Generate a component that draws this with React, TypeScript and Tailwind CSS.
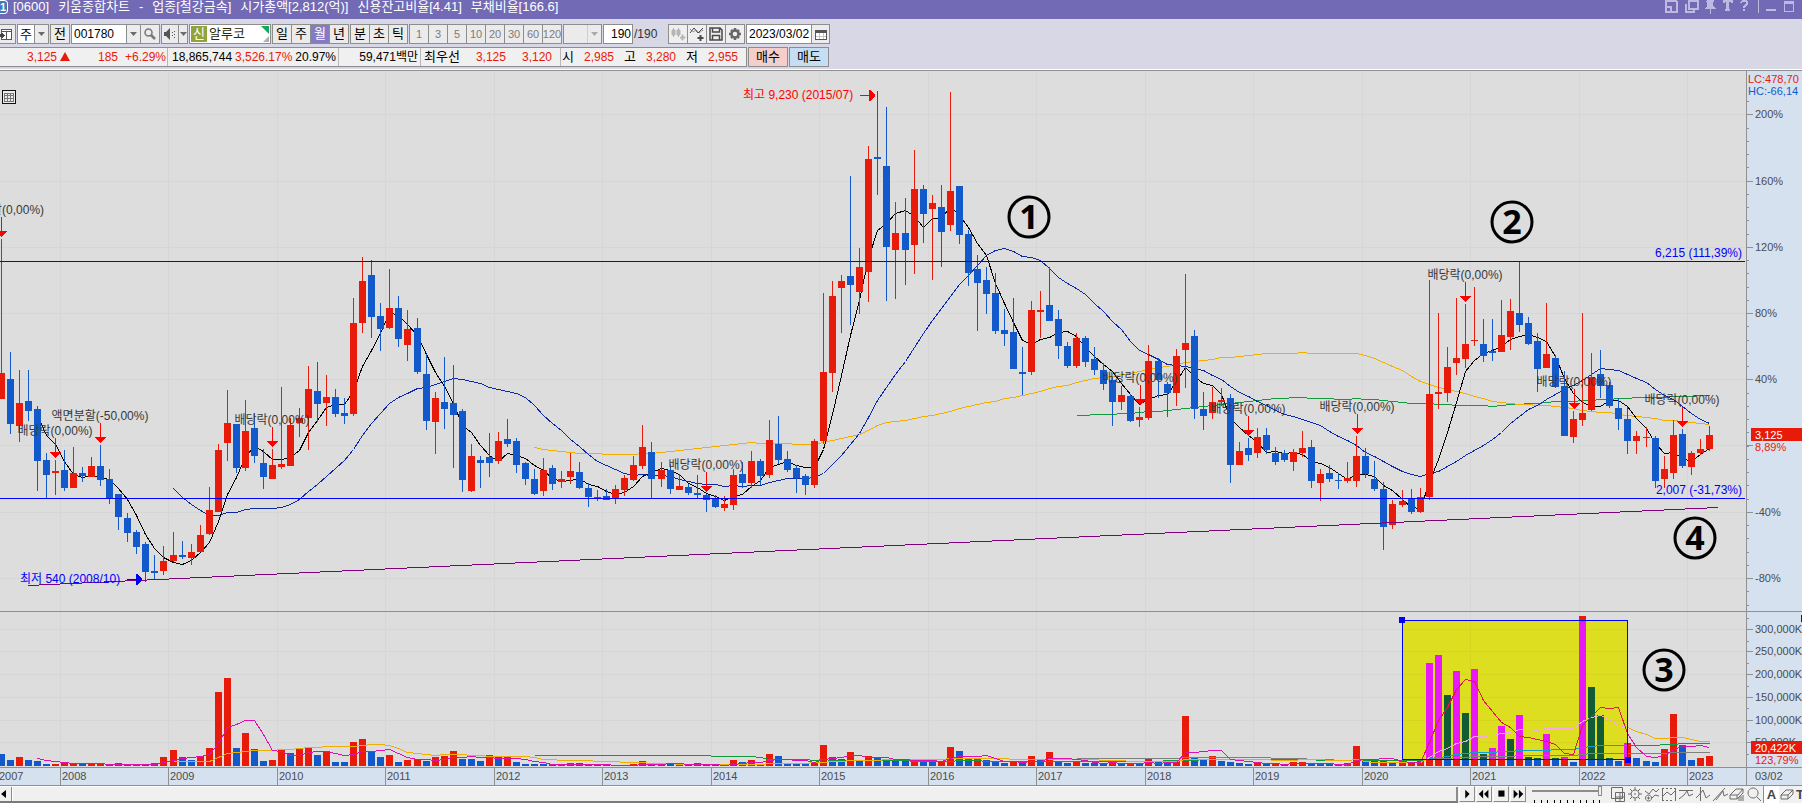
import React from 'react'

// up, high, body top, body bottom, low, volume up, volume height
type Candle = [number, number, number, number, number, number, number]

const CANDLES: Candle[] = [
  [1, 239, 373, 399, 399, 0, 12], [0, 352, 379, 424, 434, 0, 6], [1, 370, 403, 426, 442, 1, 9], [0, 370, 401, 411, 421, 0, 6],
  [0, 406, 409, 461, 491, 0, 5], [0, 453, 460, 475, 498, 0, 2], [1, 460, 471, 473, 495, 1, 2], [0, 450, 470, 488, 491, 1, 4],
  [1, 447, 473, 488, 488, 1, 3], [0, 467, 473, 476, 482, 0, 2], [1, 457, 466, 477, 477, 1, 2], [0, 445, 466, 480, 486, 1, 2],
  [0, 469, 479, 499, 504, 1, 2], [0, 494, 494, 517, 530, 1, 3], [0, 513, 518, 533, 542, 0, 2], [0, 530, 532, 547, 554, 1, 2],
  [0, 542, 544, 572, 582, 0, 2], [0, 555, 571, 573, 579, 1, 3], [1, 546, 561, 571, 575, 1, 9], [1, 532, 555, 561, 562, 1, 16],
  [0, 541, 555, 557, 559, 0, 9], [1, 544, 552, 558, 565, 0, 6], [1, 525, 535, 552, 552, 1, 10], [1, 487, 510, 534, 535, 1, 18],
  [1, 444, 450, 512, 512, 1, 74], [1, 390, 423, 443, 461, 1, 88], [0, 424, 424, 468, 473, 0, 18], [1, 400, 431, 468, 471, 1, 33],
  [0, 413, 428, 456, 463, 0, 17], [0, 449, 463, 477, 489, 0, 5], [1, 449, 465, 479, 479, 1, 6], [1, 387, 464, 467, 469, 1, 16],
  [1, 418, 425, 466, 466, 0, 13], [1, 408, 418, 423, 437, 1, 17], [1, 366, 389, 418, 450, 1, 19], [0, 362, 391, 404, 422, 0, 11],
  [1, 375, 397, 403, 426, 1, 15], [0, 389, 397, 414, 417, 0, 4], [0, 398, 413, 416, 424, 0, 4], [1, 298, 323, 414, 416, 1, 24],
  [1, 257, 281, 323, 333, 1, 27], [0, 260, 275, 317, 338, 0, 15], [0, 303, 316, 329, 351, 0, 9], [1, 269, 308, 328, 329, 1, 11],
  [0, 296, 308, 339, 347, 0, 4], [1, 310, 329, 345, 361, 1, 6], [0, 318, 328, 372, 374, 1, 7], [0, 354, 374, 421, 430, 0, 5],
  [1, 392, 398, 422, 454, 1, 9], [0, 357, 402, 409, 429, 1, 10], [0, 365, 403, 415, 468, 1, 15], [0, 409, 411, 480, 492, 0, 7],
  [1, 444, 456, 491, 492, 0, 7], [0, 456, 460, 463, 488, 0, 5], [0, 433, 457, 463, 477, 1, 11], [1, 432, 441, 461, 464, 0, 9],
  [0, 419, 439, 444, 447, 1, 10], [0, 438, 441, 465, 473, 0, 4], [0, 462, 463, 479, 485, 0, 2], [0, 469, 479, 494, 495, 0, 2],
  [1, 458, 470, 491, 496, 0, 2], [0, 465, 468, 484, 490, 0, 2], [1, 471, 479, 482, 488, 1, 2], [1, 453, 471, 477, 484, 1, 3],
  [0, 462, 472, 488, 489, 0, 3], [0, 483, 488, 497, 507, 0, 1], [1, 490, 497, 498, 501, 0, 1], [0, 489, 496, 500, 500, 1, 1],
  [1, 485, 489, 499, 504, 1, 1], [1, 475, 478, 490, 496, 1, 1], [1, 456, 465, 480, 481, 1, 2], [1, 425, 447, 466, 469, 1, 5],
  [0, 442, 452, 479, 498, 0, 2], [1, 462, 470, 479, 487, 0, 2], [0, 464, 470, 489, 494, 0, 2], [1, 474, 486, 490, 490, 0, 2],
  [0, 484, 487, 493, 495, 0, 1], [0, 475, 493, 495, 498, 1, 3], [0, 494, 495, 500, 512, 0, 1], [0, 495, 498, 507, 508, 0, 1],
  [1, 496, 504, 508, 511, 1, 1], [1, 469, 475, 505, 510, 1, 6], [0, 462, 474, 483, 488, 0, 4], [1, 451, 461, 483, 488, 1, 6],
  [0, 459, 461, 476, 485, 0, 2], [1, 420, 440, 475, 478, 1, 12], [0, 416, 444, 460, 464, 0, 10], [0, 451, 459, 470, 472, 0, 3],
  [0, 465, 468, 478, 493, 0, 3], [0, 474, 476, 485, 495, 0, 2], [1, 439, 441, 485, 488, 1, 4], [1, 293, 372, 441, 444, 1, 21],
  [1, 281, 296, 373, 392, 0, 9], [1, 275, 281, 288, 333, 0, 7], [0, 176, 276, 285, 325, 1, 14], [1, 248, 267, 292, 314, 0, 5],
  [1, 146, 159, 272, 302, 1, 10], [0, 91, 157, 159, 195, 0, 8], [0, 107, 166, 247, 301, 0, 6], [1, 202, 233, 250, 299, 0, 6],
  [0, 198, 233, 250, 285, 0, 6], [1, 150, 189, 245, 274, 1, 6], [0, 185, 189, 214, 243, 0, 5], [1, 195, 203, 209, 280, 0, 5],
  [0, 185, 207, 232, 267, 1, 4], [1, 92, 191, 225, 231, 1, 19], [0, 186, 186, 235, 244, 0, 15], [0, 230, 234, 273, 286, 0, 7],
  [0, 255, 269, 283, 331, 1, 7], [0, 267, 280, 294, 314, 0, 6], [0, 273, 293, 331, 334, 0, 4], [0, 309, 330, 334, 346, 0, 3],
  [0, 298, 332, 369, 369, 1, 5], [0, 347, 372, 374, 395, 0, 3], [1, 301, 310, 372, 375, 1, 10], [1, 291, 310, 312, 338, 0, 6],
  [0, 267, 305, 321, 321, 1, 14], [0, 310, 319, 346, 359, 0, 5], [0, 342, 346, 366, 368, 0, 3], [1, 333, 338, 366, 368, 1, 5],
  [0, 336, 338, 362, 367, 0, 3], [0, 347, 359, 370, 375, 0, 3], [0, 363, 370, 384, 390, 0, 2], [0, 377, 380, 402, 426, 1, 5],
  [1, 386, 395, 402, 410, 0, 2], [0, 394, 396, 421, 422, 1, 2], [1, 407, 417, 420, 427, 0, 2], [1, 345, 361, 418, 420, 1, 7],
  [0, 358, 361, 380, 398, 0, 4], [0, 382, 384, 393, 417, 0, 4], [1, 349, 356, 393, 406, 1, 5], [1, 274, 343, 350, 388, 1, 50],
  [0, 330, 336, 409, 419, 0, 9], [0, 392, 409, 416, 430, 0, 6], [1, 387, 402, 413, 419, 1, 10], [1, 388, 400, 402, 406, 0, 5],
  [0, 394, 398, 465, 483, 0, 4], [1, 442, 451, 465, 465, 0, 3], [0, 438, 448, 455, 461, 0, 2], [1, 428, 437, 453, 458, 1, 4],
  [0, 428, 435, 450, 454, 0, 2], [0, 447, 453, 462, 465, 1, 2], [0, 450, 453, 460, 462, 0, 2], [1, 449, 452, 462, 471, 1, 4],
  [1, 431, 448, 453, 457, 1, 4], [0, 440, 447, 481, 488, 0, 2], [1, 469, 474, 483, 501, 0, 2], [0, 465, 473, 479, 482, 0, 2],
  [0, 473, 480, 481, 489, 1, 2], [1, 462, 478, 481, 483, 1, 3], [1, 436, 456, 481, 487, 1, 20], [0, 448, 456, 474, 478, 0, 6],
  [0, 461, 479, 489, 491, 0, 5], [0, 482, 489, 527, 550, 1, 5], [1, 500, 504, 525, 529, 0, 3], [1, 490, 501, 505, 507, 1, 5],
  [0, 489, 499, 512, 514, 1, 4], [1, 488, 497, 512, 513, 1, 5], [1, 280, 394, 497, 500, 1, 103], [1, 313, 392, 394, 409, 1, 111],
  [1, 347, 367, 393, 402, 0, 71], [1, 298, 358, 363, 375, 1, 95], [1, 304, 344, 359, 368, 0, 53], [1, 287, 340, 341, 346, 1, 97],
  [0, 319, 344, 356, 362, 0, 12], [0, 319, 351, 353, 361, 1, 18], [1, 300, 335, 352, 352, 1, 40], [1, 299, 311, 337, 350, 0, 27],
  [0, 261, 313, 325, 332, 1, 51], [0, 317, 323, 344, 345, 0, 9], [0, 333, 341, 369, 392, 0, 8], [1, 303, 354, 368, 368, 1, 32],
  [0, 355, 358, 387, 388, 0, 8], [0, 371, 386, 436, 436, 1, 9], [1, 411, 419, 437, 443, 0, 4], [1, 313, 413, 420, 426, 1, 150],
  [1, 353, 377, 410, 411, 0, 79], [0, 350, 374, 386, 398, 0, 51], [0, 382, 385, 406, 408, 0, 8], [0, 398, 408, 419, 430, 0, 5],
  [0, 407, 419, 441, 454, 1, 23], [1, 431, 436, 441, 454, 0, 8], [1, 427, 437, 438, 447, 0, 5], [0, 436, 438, 481, 488, 0, 4],
  [1, 456, 469, 479, 488, 1, 17], [1, 420, 435, 473, 479, 1, 52], [0, 429, 434, 466, 468, 0, 21], [1, 451, 453, 467, 475, 0, 6],
  [1, 439, 449, 453, 455, 1, 8], [1, 426, 435, 449, 451, 1, 10],
]

const YEARS = [
  { x: -3, label: '2007' }, { x: 60, label: '2008' }, { x: 168, label: '2009' }, { x: 277, label: '2010' },
  { x: 385, label: '2011' }, { x: 494, label: '2012' }, { x: 602, label: '2013' }, { x: 711, label: '2014' },
  { x: 819, label: '2015' }, { x: 928, label: '2016' }, { x: 1036, label: '2017' }, { x: 1145, label: '2018' },
  { x: 1253, label: '2019' }, { x: 1362, label: '2020' }, { x: 1470, label: '2021' }, { x: 1579, label: '2022' },
  { x: 1687, label: '2023' },
]

const PRICE_GRID = [
  { y: 114, label: '200%' }, { y: 181, label: '160%' }, { y: 247, label: '120%' }, { y: 313, label: '80%' },
  { y: 379, label: '40%' }, { y: 445, label: '' }, { y: 512, label: '-40%' }, { y: 578, label: '-80%' },
]

const VOLUME_GRID = [
  { y: 629, label: '300,000K' }, { y: 651, label: '250,000K' }, { y: 674, label: '200,000K' },
  { y: 697, label: '150,000K' }, { y: 720, label: '100,000K' }, { y: 742, label: '50,000K' },
]

const EVENTS = [
  { x: 1, y: 217, label: '액면분할(0,00%)' },
  { x: 55, y: 438, label: '배당락(0,00%)' },
  { x: 100, y: 423, label: '액면분할(-50,00%)' },
  { x: 272, y: 427, label: '배당락(0,00%)' },
  { x: 706, y: 472, label: '배당락(0,00%)' },
  { x: 1140, y: 385, label: '배당락(0,00%)' },
  { x: 1248, y: 416, label: '배당락(0,00%)' },
  { x: 1357, y: 414, label: '배당락(0,00%)' },
  { x: 1465, y: 282, label: '배당락(0,00%)' },
  { x: 1574, y: 389, label: '배당락(0,00%)' },
  { x: 1682, y: 407, label: '배당락(0,00%)' },
]

const NOTES = [
  { x: 1029, y: 217, label: '1' },
  { x: 1512, y: 222, label: '2' },
  { x: 1664, y: 670, label: '3' },
  { x: 1695, y: 538, label: '4' },
]

const RED = '#e81a0a'
const BLUE = '#125acb'
const BASE = 766

const candleX = (i: number) => Math.round(0.8 + i * 9.037)
const closes = CANDLES.map((c) => (c[0] ? c[2] : c[3]))
const volumes = CANDLES.map((c) => BASE - c[6])

const average = (values: number[], period: number) =>
  values
    .map((_, i) => {
      if (i < period - 1) return ''
      const part = values.slice(i - period + 1, i + 1)
      const mean = part.reduce((a, b) => a + b, 0) / period
      return `${candleX(i) + 0.5},${Math.round(mean) + 0.5}`
    })
    .filter(Boolean)
    .join(' ')

const VolumeBars = ({ up, down }: { up: string; down: string }) => (
  <g>
    {CANDLES.map((c, i) => (
      <rect key={i} x={candleX(i) - 3} y={BASE - c[6]} width={7} height={c[6]} fill={c[5] ? up : down} />
    ))}
  </g>
)

const VolumeLines = ({ colors }: { colors: string[] }) => (
  <g fill="none">
    <polyline points={average(volumes, 120)} stroke={colors[3]} />
    <polyline points={average(volumes, 60)} stroke={colors[2]} />
    <polyline points={average(volumes, 20)} stroke={colors[1]} />
    <polyline points={average(volumes, 5)} stroke={colors[0]} />
  </g>
)

const Chart = () => (
  <svg
    viewBox="0 71 1802 715"
    className="block w-full h-auto bg-[#dddddd] text-[12px]"
    shapeRendering="crispEdges"
    role="img"
    aria-label="알루코 월봉 차트"
  >
    <defs>
      <clipPath id="box">
        <rect x={1403} y={621} width={224} height={138} />
      </clipPath>
    </defs>

    {/* grid */}
    <g fill="#d6d6d6">
      {YEARS.slice(1).map((year) => (
        <rect key={year.x} x={year.x} y={71} width={1} height={695} />
      ))}
      {[...PRICE_GRID, ...VOLUME_GRID].map((row) => (
        <rect key={row.y} x={0} y={row.y} width={1746} height={1} />
      ))}
    </g>

    {/* price */}
    <g fill="none">
      <polyline points={average(closes, 120)} stroke="#129a3c" />
      <polyline points={average(closes, 60)} stroke="#f0ae00" />
      <polyline points={average(closes, 20)} stroke="#0a28a8" />
      <polyline points={average(closes, 5)} stroke="#000000" />
    </g>
    {CANDLES.map(([up, high, top, bottom, low], i) => (
      <g key={i} fill={up ? RED : BLUE}>
        <rect x={candleX(i)} y={high} width={1} height={low - high} />
        <rect x={candleX(i) - 3} y={top} width={7} height={bottom - top} />
      </g>
    ))}
    <rect x={0} y={261} width={1745} height={1} fill="#0000ff" />
    <rect x={0} y={498} width={1745} height={1} fill="#0000ff" />
    <line x1={28} y1={585.5} x2={1718} y2={507.5} stroke="#800080" />

    {EVENTS.map((event) => (
      <g key={event.x}>
        <rect x={event.x} y={event.y} width={1} height={15} fill="#ff0000" />
        <path d={`M${event.x - 5} ${event.y + 14}h11l-5 6h-1z`} fill="#ff0000" />
        <text x={event.x} y={event.y - 3} textAnchor="middle" fill="#383838">{event.label}</text>
      </g>
    ))}
    <text x={743} y={99} fill="#ff0000">최고 9,230 (2015/07)</text>
    <path d="M860 95h9v-5h1l5 5v1l-5 5h-1v-5h-9z" fill="#ff0000" />
    <text x={20} y={583} fill="#0000ff">최저 540 (2008/10)</text>
    <path d="M127 579h9v-5h1l5 5v1l-5 5h-1v-5h-9z" fill="#0000ff" />
    <g fill="#0000ff" textAnchor="end">
      <text x={1742} y={257}>6,215 (111,39%)</text>
      <text x={1742} y={494}>2,007 (-31,73%)</text>
    </g>

    {/* volume */}
    <rect x={0} y={611} width={1802} height={1} fill="#909090" />
    <VolumeBars up={RED} down={BLUE} />
    <VolumeLines colors={['#e010b0', '#f0ae00', '#129a3c', '#808080']} />
    <g clipPath="url(#box)">
      <rect x={1402} y={620} width={226} height={140} fill="#dede20" />
      {YEARS.slice(14, 16).map((year) => (
        <rect key={year.x} x={year.x} y={620} width={1} height={140} fill="#d6d620" />
      ))}
      {VOLUME_GRID.map((row) => (
        <rect key={row.y} x={1402} y={row.y} width={226} height={1} fill="#d6d620" />
      ))}
      <VolumeBars up="#e819f7" down="#115c34" />
      <VolumeLines colors={['#e0184c', '#f7a8e8', '#12a0c8', '#808080']} />
    </g>
    <rect x={1402.5} y={620.5} width={225} height={139} fill="none" stroke="#0000ff" />
    <rect x={1399} y={617} width={6} height={6} fill="#0000ff" />
    <rect x={1625} y={757} width={6} height={6} fill="#0000ff" />

    {/* year axis */}
    <rect x={0} y={767} width={1802} height={19} fill="#d6e1ef" />
    <rect x={0} y={767} width={1802} height={1} fill="#909090" />
    <rect x={0} y={785} width={1802} height={1} fill="#909090" />
    <g className="text-[11px]" fill="#4c4c4c">
      {YEARS.map((year) => (
        <g key={year.x}>
          <rect x={year.x} y={768} width={1} height={17} fill="#909090" />
          <text x={year.x + 2} y={780}>{year.label}</text>
        </g>
      ))}
    </g>

    {/* value axis */}
    <rect x={1746} y={71} width={56} height={696} fill="#d6e1ef" />
    <g fill="#909090">
      <rect x={1746} y={71} width={1} height={714} />
      <rect x={1746} y={611} width={56} height={1} />
      <rect x={1746} y={767} width={56} height={1} />
      {Array.from({ length: 39 }, (_, i) => (
        <rect key={i} x={1747} y={Math.round(101 + i * 13.25)} width={2} height={1} />
      ))}
      {Array.from({ length: 7 }, (_, i) => (
        <rect key={i} x={1747} y={Math.round(618 + i * 22.6)} width={2} height={1} />
      ))}
    </g>
    <g className="text-[11px]" fill="#4c4c4c">
      {[...PRICE_GRID, ...VOLUME_GRID].map((row) => (
        <g key={row.y}>
          <rect x={1747} y={row.y} width={6} height={1} fill="#909090" />
          <text x={1755} y={row.y + 4}>{row.label}</text>
        </g>
      ))}
      <text x={1755} y={780}>03/02</text>
      <text x={1748} y={83} fill={RED}>LC:478,70</text>
      <text x={1748} y={95} fill={BLUE}>HC:-66,14</text>
      <text x={1755} y={451} fill={RED}>8,89%</text>
      <text x={1755} y={764} fill={RED}>123,79%</text>
      <rect x={1751} y={428} width={51} height={13} fill={RED} />
      <text x={1755} y={439} fill="#ffffff">3,125</text>
      <rect x={1751} y={741} width={51} height={13} fill={RED} />
      <text x={1755} y={752} fill="#ffffff">20,422K</text>
      <rect x={1801} y={615} width={1} height={7} fill="#222222" />
    </g>

    {NOTES.map((note) => (
      <g key={note.label} shapeRendering="geometricPrecision">
        <circle cx={note.x} cy={note.y} r={20} fill="none" stroke="#000000" strokeWidth={3} />
        <text
          x={note.x}
          y={note.y + 12}
          textAnchor="middle"
          className="font-['Noto_Sans',sans-serif] text-[34px] font-bold"
        >
          {note.label}
        </text>
      </g>
    ))}

    <rect x={2.5} y={90.5} width={13} height={13} fill="#ececec" stroke="#111111" />
    <path d="M4.500 93.500h9v8h-9zM4.500 95.500h9M4.500 98.500h9M7.500 93.500v8M10.500 93.500v8" fill="none" stroke="#777777" />
  </svg>
)

const Arrow = () => (
  <svg viewBox="0 0 7 4" className="w-[7px] h-1" aria-hidden="true">
    <path d="M0 0h7L3.500 4z" fill="#6b6b6b" />
  </svg>
)

const ArrowCell = ({ label }: { label: string }) => (
  <button aria-label={label} className="w-[14px] shrink-0 flex items-center justify-center border-l border-[#8d8d8d] bg-[#ececec]">
    <Arrow />
  </button>
)

const BOX = 'h-5 shrink-0 flex border border-[#8d8d8d]'

const Group = ({ items, active, muted }: { items: string[]; active?: string; muted?: boolean }) => (
  <div className={`${BOX} divide-x divide-[#8d8d8d] ${muted ? 'text-[11px] text-[#7c7c7c]' : 'text-[13px]'}`}>
    {items.map((item) => (
      <button
        key={item}
        className={`box-content w-[18px] flex items-center justify-center ${item === active ? 'bg-[#857bc2] text-white' : 'bg-[#ebebeb]'}`}
      >
        {item}
      </button>
    ))}
  </div>
)

const TitleBar = () => (
  <header className="h-[19px] flex items-start bg-[#736ab6] text-white text-[13px] leading-[13px] overflow-hidden whitespace-nowrap">
    <span className="w-[8px] h-[14px] mr-[5px] shrink-0 rounded-r-sm border border-l-0 border-white bg-[#3f79b8] text-[11px] font-bold leading-[12px]">1</span>
    <h1 className="flex gap-[9px]">
      <span>[0600]</span>
      <span>키움종합차트</span>
      <span>-</span>
      <span>업종[철강금속]</span>
      <span>시가총액[2,812(억)]</span>
      <span>신용잔고비율[4.41]</span>
      <span>부채비율[166.6]</span>
    </h1>
    <svg viewBox="0 0 137 14" className="ml-auto w-[137px] h-[14px] shrink-0" shapeRendering="crispEdges" aria-hidden="true">
      <g fill="none" stroke="#bfb9e2">
        <path d="M0.500 1v10.500h11V1M0 1h12M0 6.500h5.500v5" strokeWidth="2" />
        <path d="M24 1h9v8h-9zM21 4v7.500h8V9" strokeWidth="2" />
        <path d="M119.500 1.500h9v10h-9z" />
        <path d="M93.500 0v13" />
      </g>
      <g fill="#bfb9e2">
        <path d="M42 0h7v2h-1v4l3 3h-5v5h-1V9h-5l2-3V2h-1zM58 0h10v3h-2V2h-2v7h1v2h-5V9h1V2h-1v1h-2zM101 9h10v2h-10zM119 1h10v3h-10z" />
        <path d="M75 2l2-2h4l2 2v3l-3 2v1h-2V6l3-2V2h-4v1h-2zM78 9h2v2h-2z" />
      </g>
    </svg>
  </header>
)

const IconButton = ({ label, children }: { label: string; children: React.ReactNode }) => (
  <button aria-label={label} className="box-content w-[18px] flex items-center justify-center bg-[#efefef]">
    <svg viewBox="0 0 16 16" className="w-4 h-4" fill="none" stroke="#4a4a4a">
      {children}
    </svg>
  </button>
)

const ToolRow = () => (
  <div className="flex gap-px">
    <button aria-label="화면 분할" className="w-4 h-5 shrink-0 border border-l-0 border-[#8d8d8d] bg-[#ebebeb]">
      <svg viewBox="0 0 15 18" className="w-[15px] h-[18px]" shapeRendering="crispEdges">
        <path d="M1.500 4.500h10v10h-10zM2 6.500h9M6.500 6v8" fill="#ffffff" stroke="#555555" />
        <path d="M0 9v3h2v2l3-3.500L2 7v2z" fill="#444444" />
      </svg>
    </button>
    <div className={`${BOX} w-8 bg-white`}>
      <select aria-label="종목 구분" className="w-[16px] appearance-none pl-0.5 text-[13px] outline-none">
        <option>주</option>
      </select>
      <ArrowCell label="종목 구분 열기" />
    </div>
    <button className={`${BOX} w-5 items-center justify-center bg-[#ebebeb] text-[13px]`}>전</button>
    <div className={`${BOX} w-[89px] bg-white`}>
      <input aria-label="종목코드" defaultValue="001780" className="w-[54px] pl-0.5 text-[12px] outline-none" />
      <ArrowCell label="최근 종목" />
      <button aria-label="종목 검색" className="flex-1 flex items-center justify-center border-l border-[#8d8d8d] bg-[#ececec]">
        <svg viewBox="0 0 12 12" className="w-3 h-3" fill="none" stroke="#777777">
          <circle cx="4.500" cy="4.500" r="3.500" strokeWidth="1.500" />
          <path d="M7 7l4 4" strokeWidth="2.500" />
        </svg>
      </button>
    </div>
    <div className={`${BOX} w-[27px] bg-[#ebebeb]`}>
      <button aria-label="음성" className="flex-1 flex items-center justify-center">
        <svg viewBox="0 0 13 12" className="w-[13px] h-3" fill="#555555">
          <path d="M0 4h2l4-4v12L2 8H0zM8 4h1v1H8zM8 7h1v1H8zM10 3h1v1h-1zM10 6h1v1h-1zM10 9h1v1h-1z" />
        </svg>
      </button>
      <button aria-label="음성 메뉴" className="w-[9px] flex items-center justify-center border-l border-[#8d8d8d]">
        <Arrow />
      </button>
    </div>
    <div className={`${BOX} w-[82px] bg-white p-px text-[13px] items-center`}>
      <span className="w-4 h-4 flex items-center justify-center bg-[#93a33c] text-white">신</span>
      <span className="ml-0.5 flex-1 text-[#2d2a00]">알루코</span>
      <svg viewBox="0 0 8 16" className="w-2 h-4" aria-hidden="true">
        <path d="M0 0h8v8z" fill="#14a85a" />
        <path d="M8 10v6H2z" fill="#b0b0b0" />
      </svg>
    </div>
    <Group items={['일', '주', '월', '년']} active="월" />
    <Group items={['분', '초', '틱']} />
    <Group items={['1', '3', '5', '10', '20', '30', '60', '120']} muted />
    <div className={`${BOX} w-[39px] bg-[#ebebeb]`}>
      <select aria-label="주기" disabled className="w-[23px] appearance-none">
        <option></option>
      </select>
      <button aria-label="주기 열기" disabled className="w-[14px] flex items-center justify-center border-l border-[#b5b5b5] opacity-50">
        <Arrow />
      </button>
    </div>
    <input aria-label="조회 개수" defaultValue="190" className="w-[30px] h-5 shrink-0 border border-[#8d8d8d] bg-white pr-px text-right text-[12px] outline-none" />
    <span className="w-[33px] shrink-0 text-[12px] leading-5 text-[#333333]">/190</span>
    <div className={`${BOX} divide-x divide-[#8d8d8d]`}>
      <IconButton label="차트 추가">
        <path d="M3.500 2v9M8.500 2v9" stroke="#b5b5b5" />
        <path d="M2 4h3v5H2zM7 4h3v5H7zM11 11h1v-2h1v2h2v1h-2v2h-1v-2h-2z" fill="#b5b5b5" stroke="#b5b5b5" />
      </IconButton>
      <IconButton label="지표 추가">
        <path d="M1 7l4-5 4 5 5-5" />
        <path d="M1 3l3 3 3-2 3 3 4-3" strokeDasharray="1 1" />
        <path d="M11.500 9v6M8.500 12h6" strokeWidth="2" />
      </IconButton>
      <IconButton label="저장">
        <path d="M2 2h10l2 2v10H2zM4.500 2v4h7V2M4.500 14V9.500h7V14" strokeWidth="1.500" />
      </IconButton>
      <IconButton label="설정">
        <circle cx="8" cy="8" r="3.500" strokeWidth="2.500" stroke="#666666" />
        <path d="M8 2v2M8 12v2M2 8h2M12 8h2M4 4l1 1M11 11l1 1M12 4l-1 1M5 11l-1 1" strokeWidth="2.500" stroke="#666666" />
      </IconButton>
    </div>
    <div className={`${BOX} w-[84px] bg-white`}>
      <input aria-label="일자" defaultValue="2023/03/02" className="w-16 pl-0.5 text-[12px] outline-none" />
      <button aria-label="달력" className="flex-1 flex items-center justify-center border-l border-[#8d8d8d] bg-[#ececec]">
        <svg viewBox="0 0 12 11" className="w-3 h-[11px]" fill="none" stroke="#555555" shapeRendering="crispEdges">
          <path d="M0 4h12v7H0z" fill="#ffffff" stroke="none" />
          <path d="M4.500 4v6M8.500 4v6M1 7.500h10" stroke="#c4c4c4" />
          <path d="M0.500 1.500h11v9H0.500z" />
          <path d="M0 2.500h12" strokeWidth="3" />
        </svg>
      </button>
    </div>
  </div>
)

const QuoteRow = () => (
  <div className="flex gap-px text-[12px] leading-[18px] whitespace-nowrap">
    <div className="h-5 w-[747px] shrink-0 flex border border-l-0 border-[#8d8d8d] bg-[#f0f0f0] divide-x divide-[#b8b8b8] text-[#e81a0a]">
      <div className="w-[168px] flex">
        <span className="w-[57px] text-right">3,125</span>
        <svg viewBox="0 0 10 9" className="w-[10px] h-[9px] mt-1 ml-[3px]" aria-hidden="true">
          <path d="M5 0l5 9H0z" fill="#e81a0a" />
        </svg>
        <span className="w-[48px] text-right">185</span>
        <span className="w-[48px] text-right">+6.29%</span>
      </div>
      <div className="w-[171px] flex justify-between pl-1 pr-0.5">
        <span className="text-black">18,865,744</span>
        <span>3,526.17%</span>
        <span className="text-black">20.97%</span>
      </div>
      <div className="w-[82px] pr-0.5 text-right text-black">59,471백만</div>
      <div className="w-[140px] flex justify-between pl-[3px] pr-2">
        <span className="text-[13px] text-black">최우선</span>
        <span>3,125</span>
        <span>3,120</span>
      </div>
      <div className="flex-1 flex justify-between pl-px pr-2">
        <span className="text-[13px] text-black">시</span>
        <span>2,985</span>
        <span className="text-[13px] text-black">고</span>
        <span>3,280</span>
        <span className="text-[13px] text-black">저</span>
        <span>2,955</span>
      </div>
    </div>
    <button className="w-10 h-5 border border-[#8d8d8d] bg-[#f5cdc9] text-[13px]">매수</button>
    <button className="w-10 h-5 border border-[#8d8d8d] bg-[#c6def3] text-[13px]">매도</button>
  </div>
)

const PLAY = [
  { label: '재생', d: 'M6 3l5 5-5 5z' },
  { label: '뒤로', d: 'M7 3v10L2 8zM13 3v10L8 8z' },
  { label: '정지', d: 'M5 4h7v7H5z' },
  { label: '앞으로', d: 'M3 3l5 5-5 5zM9 3l5 5-5 5z' },
]

const TOOLS = [
  { label: '화면 추가', d: 'M1.500 1.500h11v11h-11zM5.500 6.500h9v9h-9zM5.500 11h9M10 6.500v9' },
  { label: '설정', d: 'M8 4a4 4 0 1 0 .1 0zM8 1v3M8 12v3M1 8h3M12 8h3M3 3l2 2M11 11l2 2M13 3l-2 2M5 11l-2 2M8 7v2' },
  { label: '지표', d: 'M1 5l4 3 4-5 3 3 3-3M8 12l3-3 4 1M4.500 9a3 3 0 1 0 .1 0zM3 12h3M4.500 10.500v3' },
  { label: '구간', d: 'M1.500 2v13M14.500 2v13M1 2.500h2M5 2.500h2M9 2.500h2M13 2.500h2M1 14.500h2M5 14.500h2M9 14.500h2M2 10l4-4 4 3 4-4' },
  { label: '수평선', d: 'M1 4.500h14M1 13l5-4 3-4 2 5 4-2' },
  { label: '수직선', d: 'M5.500 1v14M1 12l3-3 4-5 3 8 4-3' },
  { label: '추세선', d: 'M1 15L13 2M4 14l4-5 3-4 1 5 4-2' },
  { label: '전체 지우기', d: 'M1 9l6-6h7l-5 6zM1 9v4h7V9M8 13l6-6V3M10 11v4M12 10v5M14 9v6' },
  { label: '확대', d: 'M7 2a5 5 0 1 0 .1 0zM11 11l4 4' },
]

const BottomBar = () => (
  <footer className="h-[17px] flex bg-[#f0f0f0] overflow-hidden">
    <div className="flex-1 flex border-t border-white border-b-2 border-b-[#7a7a7a]">
      <button aria-label="왼쪽으로" className="w-3 shrink-0 flex items-center border-r border-[#8d8d8d]">
        <svg viewBox="0 0 5 8" className="w-[5px] h-2 ml-px">
          <path d="M5 0v8L0 4z" />
        </svg>
      </button>
      <div className="flex-1 border-l border-r-2 border-l-white border-r-[#8d8d8d]" />
    </div>
    <div className="flex gap-px pl-px">
      {PLAY.map((item) => (
        <button key={item.label} aria-label={item.label} className="w-4 h-4 border border-[#8d8d8d] border-t-white border-l-white">
          <svg viewBox="0 0 16 16" className="w-[14px] h-[14px]">
            <path d={item.d} />
          </svg>
        </button>
      ))}
    </div>
    <div className="w-[84px] px-1.5 pt-0.5">
      <input
        type="range"
        aria-label="재생 속도"
        defaultValue={100}
        className="block w-[70px] h-1.5 appearance-none bg-transparent [&::-webkit-slider-runnable-track]:h-0.5 [&::-webkit-slider-runnable-track]:bg-[#8d8d8d] [&::-webkit-slider-thumb]:appearance-none [&::-webkit-slider-thumb]:-mt-1 [&::-webkit-slider-thumb]:w-1 [&::-webkit-slider-thumb]:h-[10px] [&::-webkit-slider-thumb]:border [&::-webkit-slider-thumb]:border-[#8d8d8d] [&::-webkit-slider-thumb]:bg-[#f0f0f0]"
      />
      <div className="mt-1.5 flex justify-between pl-0.5 pr-1">
        {Array.from({ length: 11 }, (_, i) => (
          <span key={i} className="w-px h-[3px] bg-black" />
        ))}
      </div>
    </div>
    <div className="w-[192px] flex overflow-hidden">
      {TOOLS.map((tool) => (
        <button key={tool.label} aria-label={tool.label} className="w-[17px] shrink-0">
          <svg viewBox="0 0 16 17" className="w-4 h-[17px]" fill="none" stroke="#6a6a6a">
            <path d={tool.d} />
          </svg>
        </button>
      ))}
      <button className="w-4 shrink-0 border-l border-[#8d8d8d] bg-white text-[13px] font-bold leading-[17px] text-[#444444]">A</button>
      <button aria-label="지우개" className="w-[17px] shrink-0">
        <svg viewBox="0 0 16 17" className="w-4 h-[17px]" fill="none" stroke="#6a6a6a">
          <path d="M2 9l5-5h7l-5 5zM2 9v4h7V9M9 13l5-5V4" />
        </svg>
      </button>
      <button className="shrink-0 text-[13px] font-bold leading-[17px] text-[#444444]">T</button>
    </div>
  </footer>
)

const App = () => {
  return (
    <div className="w-full overflow-hidden font-['Liberation_Sans','Noto_Sans_CJK_KR',sans-serif] text-black">
      <TitleBar />
      <div className="flex flex-col gap-[3px] pt-[5px] pb-0.5 bg-[#d8d7e5]">
        <ToolRow />
        <QuoteRow />
      </div>
      <div className="border-t border-b border-t-white border-b-[#909090]" />
      <Chart />
      <BottomBar />
    </div>
  )
}

export default App
